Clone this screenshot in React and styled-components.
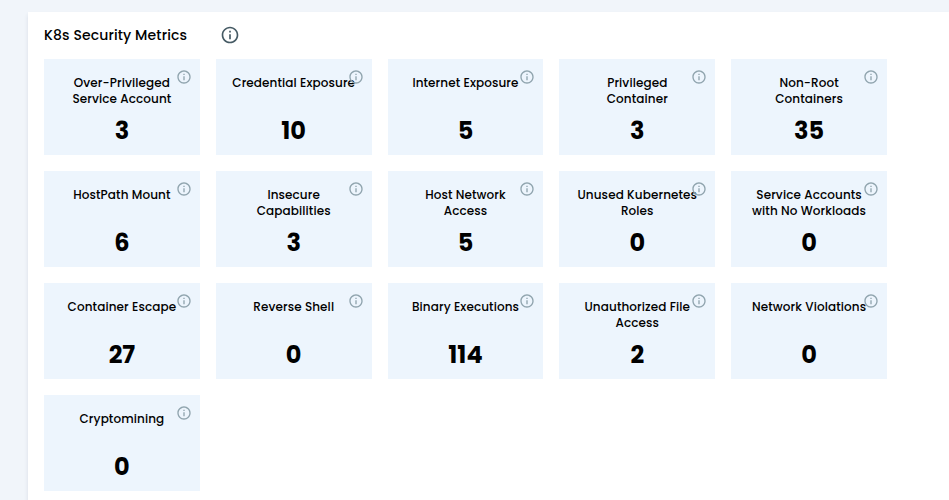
import React from "react";
import styled, { createGlobalStyle } from "styled-components";

const GlobalStyle = createGlobalStyle`
  * { box-sizing: border-box; }
  body { margin: 0; background: #f1f5fa; font-family: Poppins, "Open Sans", sans-serif; overflow: hidden; }
`;
const Page = styled.div`
  height: 500px;
  padding: 12px 0 0 28px;
  overflow: hidden;
`;
const Panel = styled.section`
  height: 520px;
  padding: 0 16px;
  background: #fff;
  box-shadow: 0 3px 4px rgba(40, 60, 90, 0.12);
`;
const Header = styled.header`
  display: flex;
  align-items: center;
  gap: 33px;
  height: 47px;
`;
const Title = styled.h2`
  margin: 0;
  width: 143px;
  font-size: 14px;
  font-weight: 500;
  letter-spacing: 0.12px;
  white-space: nowrap;
  color: #000;
`;
const HeaderIcon = styled.span`
  display: flex;
  margin-bottom: 1px;
`;
const Grid = styled.div`
  display: grid;
  grid-template-columns: repeat(5, 155.8px);
  grid-auto-rows: 96px;
  gap: 16px;
`;
const Card = styled.article`
  position: relative;
  display: flex;
  flex-direction: column;
  align-items: center;
  justify-content: space-between;
  padding: 16px 0 8px;
  background: #edf5fd;
  color: #000;
`;
const Label = styled.div`
  font-size: 12px;
  line-height: 16px;
  font-weight: 500;
  letter-spacing: 0.1px;
  text-align: center;
`;
const Line = styled.div`
  white-space: nowrap;
`;
const Value = styled.div`
  font-size: 24px;
  line-height: 32px;
  font-weight: 700;
`;
const Corner = styled.span`
  position: absolute;
  top: 10px;
  right: 8px;
  display: flex;
`;

function InfoIcon({ size, color }) {
  return (
    <svg width={size} height={size} viewBox="0 0 24 24" fill={color}>
      <path d="M11 7h2v2h-2zm0 4h2v6h-2zm1-9C6.48 2 2 6.48 2 12s4.48 10 10 10 10-4.48 10-10S17.52 2 12 2zm0 18c-4.41 0-8-3.59-8-8s3.59-8 8-8 8 3.59 8 8-3.59 8-8 8z" />
    </svg>
  );
}

const metrics = [
  [["Over-Privileged", "Service Account"], 3],
  [["Credential Exposure"], 10],
  [["Internet Exposure"], 5],
  [["Privileged", "Container"], 3],
  [["Non-Root", "Containers"], 35],
  [["HostPath Mount"], 6],
  [["Insecure", "Capabilities"], 3],
  [["Host Network", "Access"], 5],
  [["Unused Kubernetes", "Roles"], 0],
  [["Service Accounts", "with No Workloads"], 0],
  [["Container Escape"], 27],
  [["Reverse Shell"], 0],
  [["Binary Executions"], 114],
  [["Unauthorized File", "Access"], 2],
  [["Network Violations"], 0],
  [["Cryptomining"], 0],
];

export default function App() {
  return (
    <>
      <GlobalStyle />
      <Page>
        <Panel>
          <Header>
            <Title>K8s Security Metrics</Title>
            <HeaderIcon><InfoIcon size={20} color="#455a64" /></HeaderIcon>
          </Header>
          <Grid>
            {metrics.map(([lines, value]) => (
              <Card key={lines[0]}>
                <Label>{lines.map((line) => <Line key={line}>{line}</Line>)}</Label>
                <Corner><InfoIcon size={16} color="#90a4ae" /></Corner>
                <Value>{value}</Value>
              </Card>
            ))}
          </Grid>
        </Panel>
      </Page>
    </>
  );
}
